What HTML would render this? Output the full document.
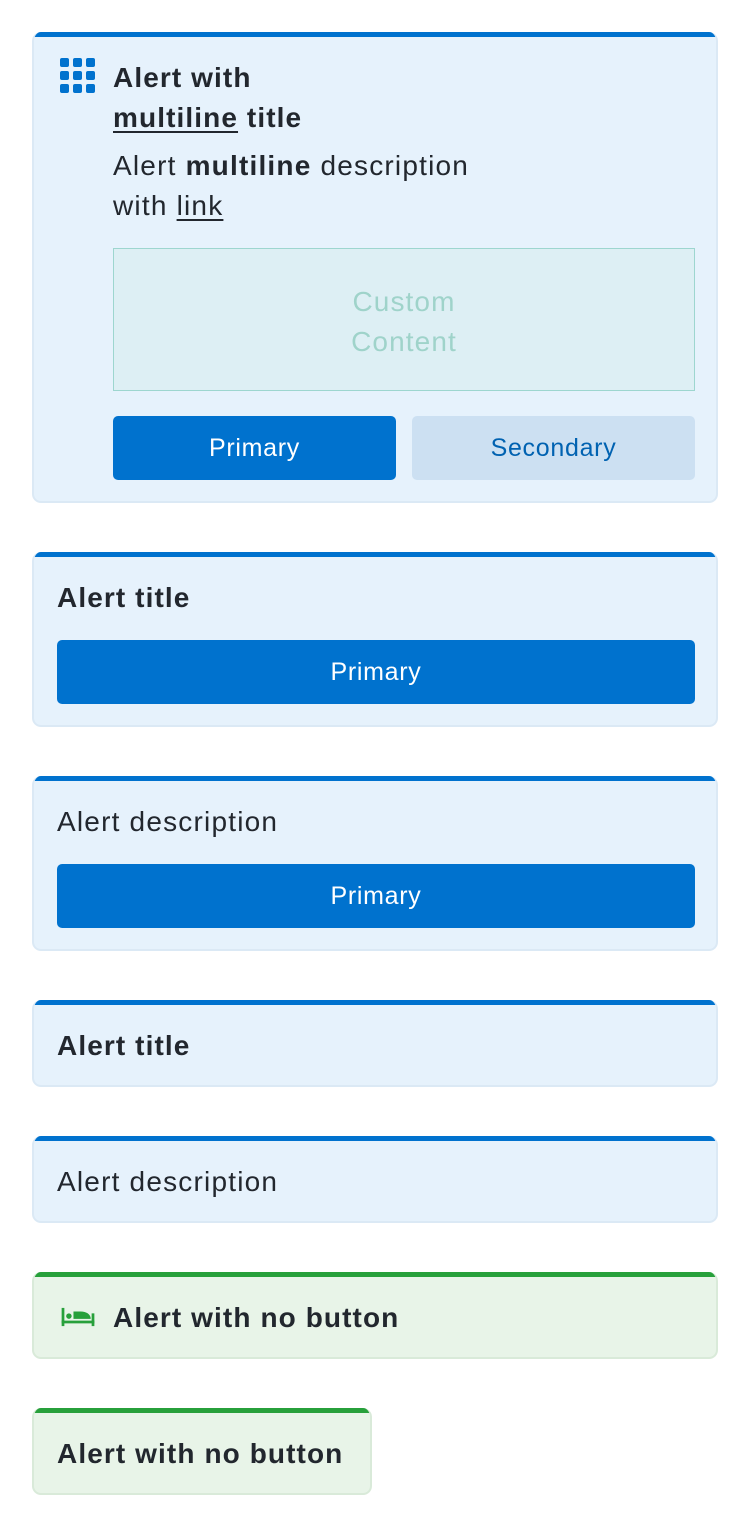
<!DOCTYPE html>
<html><head><style>
body{margin:0;background:#fff;font-family:"Liberation Sans",sans-serif;color:#22272e;}
.c{position:absolute;left:32px;width:686px;box-sizing:border-box;background:#e6f2fc;border:2px solid #dbe9f5;border-top:none;border-radius:9px;overflow:hidden}
.c:before{content:"";position:absolute;left:-2px;right:-2px;top:0;height:5px;background:#0072ce}
.g{background:#e8f4e8;border-color:#d9ead9}.g:before{background:#27a03b}
.t{font-weight:bold;font-size:28px;line-height:40px;letter-spacing:1.1px;white-space:nowrap}
.d{font-size:28px;line-height:40px;letter-spacing:1.2px;white-space:nowrap}
.b{position:absolute;height:64px;border-radius:5px;background:#0072ce;color:#fff;font-size:25px;letter-spacing:0.7px;line-height:64px;text-align:center}
u{text-decoration-thickness:2px;text-underline-offset:4px}
</style></head><body>
<div class="c" style="top:32px;height:471px">
<svg style="position:absolute;left:26px;top:26px" width="36" height="36" viewBox="0 0 36 36" fill="#0072ce">
<rect x="0" y="0" width="9" height="9" rx="2"/><rect x="13" y="0" width="9" height="9" rx="2"/><rect x="26" y="0" width="9" height="9" rx="2"/>
<rect x="0" y="13" width="9" height="9" rx="2"/><rect x="13" y="13" width="9" height="9" rx="2"/><rect x="26" y="13" width="9" height="9" rx="2"/>
<rect x="0" y="26" width="9" height="9" rx="2"/><rect x="13" y="26" width="9" height="9" rx="2"/><rect x="26" y="26" width="9" height="9" rx="2"/></svg>
<div style="position:absolute;left:79px;top:26px;width:560px">
<div class="t"><span>Alert with</span><br><u>multiline</u> title</div>
<div class="d" style="margin-top:8px">Alert <b>multiline</b> description<br>with <u>link</u></div></div>
<div style="position:absolute;left:79px;top:216px;width:582px;height:143px;box-sizing:border-box;border:1px solid #9dd6cf;background:#ddeff4;color:#9fd3ca;font-size:28px;letter-spacing:1.1px;line-height:40px;text-align:center;padding-top:33px">Custom<br>Content</div>
<div class="b" style="left:79px;top:384px;width:283px">Primary</div>
<div class="b" style="left:378px;top:384px;width:283px;background:#cce0f2;color:#0062b1">Secondary</div>
</div>
<div class="c" style="top:552px;height:175px"><div class="t" style="position:absolute;left:23px;top:26px">Alert title</div><div class="b" style="left:23px;top:88px;width:638px">Primary</div></div>
<div class="c" style="top:776px;height:175px"><div class="d" style="position:absolute;left:23px;top:26px">Alert description</div><div class="b" style="left:23px;top:88px;width:638px">Primary</div></div>
<div class="c" style="top:1000px;height:87px"><div class="t" style="position:absolute;left:23px;top:26px">Alert title</div></div>
<div class="c" style="top:1136px;height:87px"><div class="d" style="position:absolute;left:23px;top:26px">Alert description</div></div>
<div class="c g" style="top:1272px;height:87px">
<svg style="position:absolute;left:27px;top:35px" width="34" height="20" viewBox="0 0 36 22" fill="#27a03b"><rect x="0" y="1" width="3" height="20"/><rect x="33" y="7" width="3" height="14"/><rect x="0" y="15" width="36" height="3"/><circle cx="8" cy="10" r="3"/><path d="M13 13V5h8c6 0 11 3 11 8z"/></svg>
<div class="t" style="position:absolute;left:79px;top:26px">Alert with no button</div></div>
<div class="c g" style="top:1408px;height:87px;width:340px"><div class="t" style="position:absolute;left:23px;top:26px">Alert with no button</div></div>
</body></html>
